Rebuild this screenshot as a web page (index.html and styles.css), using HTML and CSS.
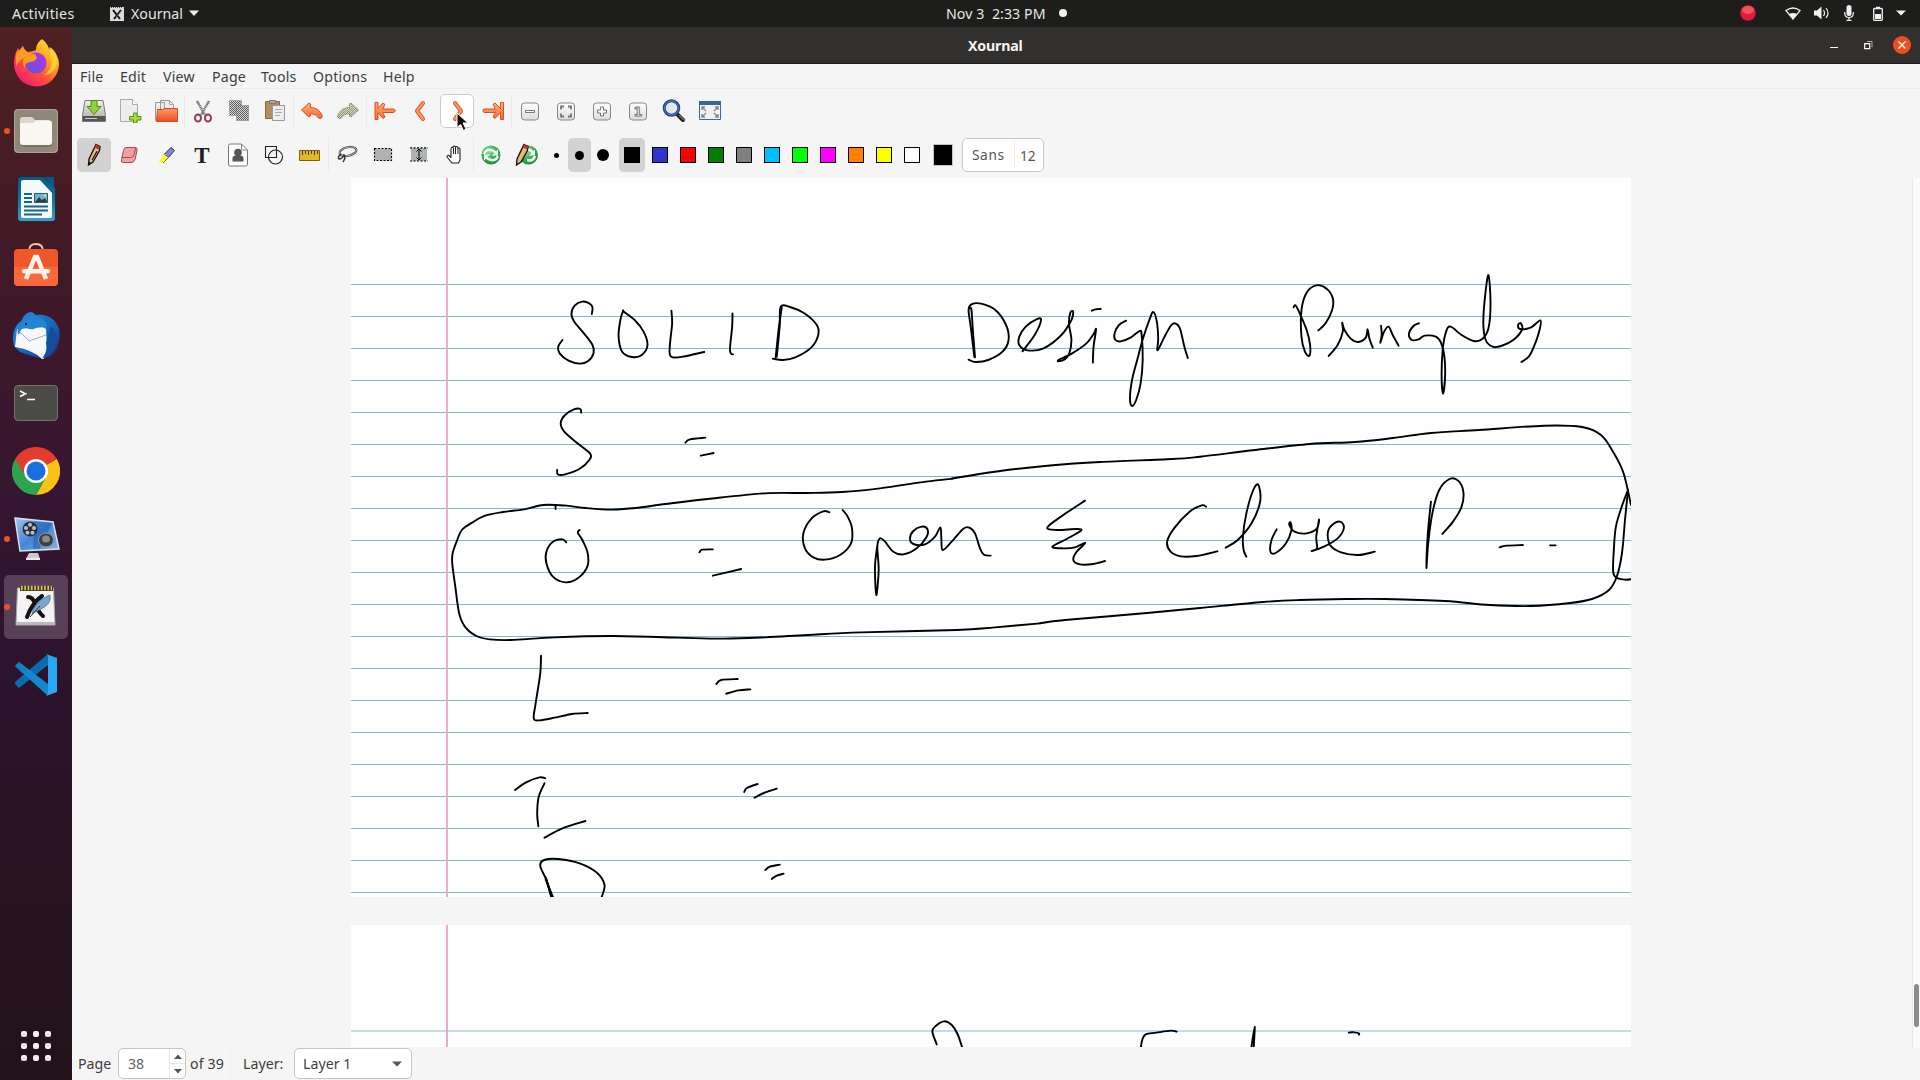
FILE: index.html
```html
<!DOCTYPE html>
<html lang="en">
<head>
<meta charset="utf-8">
<title>Xournal</title>
<link rel="stylesheet" href="styles.css">
</head>
<body>
<svg class="defs" width="0" height="0" aria-hidden="true">
  <defs>
    <linearGradient id="orange" x1="0" y1="0" x2="0" y2="1"><stop offset="0" stop-color="#ffae7c"/><stop offset="1" stop-color="#fb6a35"/></linearGradient>
    <linearGradient id="fold" x1="0" y1="0" x2="0" y2="1"><stop offset="0" stop-color="#ff9a68"/><stop offset="1" stop-color="#ee4a1d"/></linearGradient>
    <linearGradient id="key" x1="0" y1="0" x2="0" y2="1"><stop offset="0" stop-color="#fff"/><stop offset="1" stop-color="#dcdcdc"/></linearGradient>
    <linearGradient id="metal" x1="0" y1="0" x2="0" y2="1"><stop offset="0" stop-color="#f2f2f2"/><stop offset="1" stop-color="#a8a8a8"/></linearGradient>
    <linearGradient id="fox" x1="1" y1="0" x2="0.2" y2="1"><stop offset="0" stop-color="#fff44f"/><stop offset="0.35" stop-color="#ffb01e"/><stop offset="0.65" stop-color="#ff5238"/><stop offset="1" stop-color="#f0157c"/></linearGradient>
    <linearGradient id="globe" x1="1" y1="0" x2="0" y2="1"><stop offset="0" stop-color="#b833e1"/><stop offset="1" stop-color="#5b54e0"/></linearGradient>
    <linearGradient id="writer" x1="0" y1="0" x2="0" y2="1"><stop offset="0" stop-color="#045a83"/><stop offset="0.5" stop-color="#0c76a3"/><stop offset="1" stop-color="#36a0cd"/></linearGradient>
    <linearGradient id="bird" x1="0" y1="0" x2="1" y2="1"><stop offset="0" stop-color="#2492dd"/><stop offset="0.6" stop-color="#1763b4"/><stop offset="1" stop-color="#2c1c6d"/></linearGradient>
    <linearGradient id="screen" x1="0" y1="0" x2="1" y2="1"><stop offset="0" stop-color="#9cc6f2"/><stop offset="0.5" stop-color="#4486d6"/><stop offset="1" stop-color="#89b6e8"/></linearGradient>
    <radialGradient id="green" cx="0.4" cy="0.3" r="0.8"><stop offset="0" stop-color="#8fe39c"/><stop offset="0.6" stop-color="#29a94a"/><stop offset="1" stop-color="#178334"/></radialGradient>
    <pattern id="dither" width="2" height="2" patternUnits="userSpaceOnUse"><rect width="2" height="2" fill="#d8d8d6"/><rect width="1" height="1" fill="#5c5c5c"/><rect x="1" y="1" width="1" height="1" fill="#5c5c5c"/></pattern>
  </defs>
</svg>

<header class="topbar">
  <span class="activities">Activities</span>
  <span class="appmenu">
    <svg width="14" height="15" viewBox="0 0 14 15"><path fill="#ddd" d="M0 1h14v14H0z"/><path stroke="#555" stroke-dasharray="1 1" d="M1 1.5h12"/><path fill="none" stroke="#111" stroke-width="2" d="M3 4l7 9M11 4l-7 9"/><path stroke="#777" d="M12 4l-6 7"/></svg>
    <span class="appname">Xournal</span>
    <svg width="10" height="6" viewBox="0 0 10 6"><path fill="#f2f2f2" d="M0 .5h10L5 6z"/></svg>
  </span>
  <span class="clock">Nov 3&nbsp; 2:33 PM</span>
  <span class="notice"></span>
  <span class="tray">
    <svg class="rec" width="16" height="16" viewBox="0 0 16 16"><circle cx="8" cy="8" r="7.8" fill="#e01b3c"/><ellipse cx="8" cy="5" rx="6" ry="4" fill="#ff6a6a" opacity=".7"/></svg>
    <svg class="wifi" width="16" height="13" viewBox="0 0 16 13"><path fill="none" stroke="#f2f2f2" stroke-width="1.3" d="M1 3.6Q8-1.6 15 3.6L8 12z"/><path fill="#f2f2f2" d="M4 7q4-2 8 0l-4 5.4z"/></svg>
    <svg class="vol" width="16" height="14" viewBox="0 0 16 14"><path fill="#f2f2f2" d="M0 4.5h3L7.5.5v13L3 9.500H0z"/><path fill="none" stroke="#f2f2f2" stroke-width="1.2" d="M9.500 4q2 3 0 6M12 2q4 5 0 10"/></svg>
    <svg class="mic" width="10" height="16" viewBox="0 0 10 16"><rect x="2.500" width="5" height="11" rx="2.500" fill="#f2f2f2"/><path fill="none" stroke="#f2f2f2" stroke-width="1.2" d="M.7 7v1.500Q1 12.500 5 12.500t4.300-4V7M5 12.500v3M2.500 15.300h5"/></svg>
    <svg class="bat" width="10" height="15" viewBox="0 0 10 15"><path fill="none" stroke="#f2f2f2" stroke-width="1.300" d="M3 1.500h4M1.500 2.500h7q.8 0 .8 1v9.800q0 1-.8 1h-7q-.8 0-.8-1V3.500q0-1 .8-1z"/><path fill="#f2f2f2" d="M2 8h6v5H2z"/></svg>
    <svg class="caret" width="10" height="6" viewBox="0 0 10 6"><path fill="#f2f2f2" d="M0 .5h10L5 5.500z"/></svg>
  </span>
</header>

<div class="desktop">
<nav class="dock">
  <div class="app"><svg width="48" height="48" viewBox="0 0 48 48">
    <path fill="url(#fox)" d="M30 0q6 5 7 11l1-3q9 8 9 17A22.500 22.500 0 0 1 2 25Q2 16 6 9l2 4 3-6q1 4 5 6 6-1 8-2 0-7 6-11z"/>
    <circle cx="24" cy="24" r="10.500" fill="url(#globe)"/>
    <path fill="#ff9b25" d="M4 15l7-8q1 5 6 7l6 1 2 4q-2 4-8 4-5 2-4 6-4-5-1-10-5 2-8 8z"/>
    <path fill="#fed639" opacity=".8" d="M30 1q6 5 8 14 6 12-6 21 13-1 13-16 0-7-6-11l-1 3q-2-7-8-11z"/>
  </svg></div>
  <div class="app running"><svg width="48" height="48" viewBox="0 0 48 48"><rect x="2" y="2" width="44" height="44" rx="4" fill="#8f8778"/><rect x="2.500" y="2.500" width="43" height="43" rx="4" fill="none" stroke="#ada597"/><path fill="#7b7365" d="M9 17h31v20q0 3-3 3H12q-3 0-3-3z"/><path fill="#ddd6cc" d="M8 13q0-3 3-3h9l3 3h14l2 3H8z"/><path fill="#faf7f3" d="M8 16h13l3-2.500h13q3 0 3 3V35q0 3-3 3H11q-3 0-3-3z"/></svg></div>
  <div class="app"><svg width="48" height="48" viewBox="0 0 48 48"><path fill="url(#writer)" d="M9 2h23l11 11v30q0 3-3 3H9q-3 0-3-3V5q0-3 3-3z"/><path fill="#045b84" d="M33 2h9v11z"/><path fill="#f5fafc" d="M11 5h17l12 13v23q0 2-2 2H11q-2 0-2-2V7q0-2 2-2z"/><path stroke="#14658d" stroke-width="2" d="M12 19h8M12 23h8M12 27h8M12 31.500h24M12 35.500h24M12 39.500h18"/><path fill="#65b5dd" stroke="#245c79" d="M22.500 18.500h13v9h-13z"/><path fill="#333e2e" d="M23 27l4-5 3 3 3-2 2 4z"/><circle cx="33" cy="20.500" r="1.300" fill="#ffd54a"/></svg></div>
  <div class="app"><svg width="48" height="48" viewBox="0 0 48 48"><path fill="none" stroke="#f6c6a9" stroke-width="1.800" d="M17 8q0-7 7-7t7 7"/><rect x="2" y="6" width="44" height="37" rx="4" fill="#f0572b"/><path fill="#ff7247" opacity=".6" d="M2 24h44v15q0 4-4 4H6q-4 0-4-4z"/><path fill="none" stroke="#fff4ec" stroke-width="4.500" d="M14 36L23 14h2l9 22"/><rect x="10" y="26" width="28" height="4.500" rx="2.200" fill="#fff4ec"/></svg></div>
  <div class="app"><svg width="48" height="48" viewBox="0 0 48 48"><circle cx="24" cy="25" r="22" fill="#2a1a63"/><path fill="url(#bird)" d="M2 35Q-2 18 10 9L8 17Q10 1 20 1l4 3q17-2 23 14 3 15-7 26-5 4-13 3L8 41z"/><path fill="#f6f8fc" d="M5 18l29-2 1 25-4 8Q22 39 3 36z"/><path fill="none" stroke="#9eabc5" d="M6 19l11 11 17-6"/><path fill="#2185d1" d="M9 14q7-14 20-7 8 5 5 11-6-5-12 0-5 1-9-2-5 2-6 8-4-5 2-10z"/><path fill="#114f9c" d="M39 15q10 10 2 25-4 6-11 7 6-6 4-15z"/><circle cx="14" cy="13" r="1.200" fill="#092a55"/></svg></div>
  <div class="app"><svg width="48" height="48" viewBox="0 0 48 48"><rect x="2.500" y="6.500" width="43" height="35" rx="3.500" fill="#4b4b48" stroke="#73736f"/><path fill="none" stroke="#fff" stroke-width="1.600" d="M8 12l5.500 2.700L8 17.500M15 20.500h8"/></svg></div>
  <div class="app"><svg width="48" height="48" viewBox="0 0 48 48"><path fill="#e33b2e" d="M24 24L3.200 12A24 24 0 0 1 44.800 12z"/><path fill="#fbc116" d="M24 24L44.800 12A24 24 0 0 1 24 48L34 30z"/><path fill="#2da44e" d="M24 24l10 6L24 48A24 24 0 0 1 3.200 12z"/><path fill="#e33b2e" d="M3.200 12L14 30V12z"/><path fill="#e33b2e" d="M14 12h30.800L34 15z"/><circle cx="24" cy="24" r="12" fill="#fff"/><circle cx="24" cy="24" r="9.500" fill="#1a6fe0"/></svg></div>
  <div class="app running"><svg width="48" height="48" viewBox="0 0 48 48"><path fill="url(#screen)" stroke="#dce1e8" stroke-width="1.500" d="M3 3l38 4 6 27-39 2z"/><path fill="#1857b0" opacity=".5" d="M22 6l18 2-12 26h-7z"/><circle cx="18" cy="14" r="7.500" fill="#2b2e34"/><g fill="#b9c0c9"><circle cx="18" cy="9.700" r="2"/><circle cx="14" cy="13" r="2"/><circle cx="22" cy="13" r="2"/><circle cx="15.500" cy="17.700" r="2"/><circle cx="20.500" cy="17.700" r="2"/></g><ellipse cx="34" cy="25" rx="7.500" ry="7" fill="#3b4046" stroke="#999"/><ellipse cx="34" cy="24" rx="4" ry="3.500" fill="#878b90"/><path fill="#c9cbcd" d="M17 38h9l2 6H14z"/><path fill="#ededed" d="M14 43h14v2H14z"/></svg></div>
  <div class="app running active"><svg width="48" height="48" viewBox="0 0 48 48"><path fill="#f4f4f2" stroke="#aaa" d="M5.500 5h36l1.500 37H4z"/><path fill="#bbb" d="M4 39h39v3H4z"/><path fill="#333" d="M8 3h33v5H8z"/><path stroke="#e0c63c" stroke-width="4.500" stroke-dasharray="1.700 1.600" d="M9 5h31"/><path fill="none" stroke="#111" stroke-width="4" stroke-linecap="round" d="M16 14q5 0 7 7 4 9 8 12M30 13Q20 20 15 34"/><path fill="#7da6ce" stroke="#446a93" stroke-width=".7" d="M20 31q2-13 18-19 2 9-9 14z"/><path stroke="#333" d="M18 34l10-11"/></svg></div>
  <div class="app"><svg width="48" height="48" viewBox="0 0 48 48"><path fill="#0c6cae" d="M3 33l4 4L36 14V3L3 31z"/><path fill="#1488ce" d="M3 15l4-4 29 22v12z"/><path fill="#27a8f1" d="M34 3l11 4v34l-11 4q2-1 2-3V6q0-2-2-3z"/><path fill="#0f78bd" d="M3 15l4-4 9 7-5 5z" opacity=".5"/></svg></div>
  <div class="showapps"><i></i><i></i><i></i><i></i><i></i><i></i><i></i><i></i><i></i></div>
</nav>

<main class="window">
  <div class="titlebar"><h1 class="title">Xournal</h1>
    <div class="controls">
      <svg width="8" height="10" viewBox="0 0 8 10"><path stroke="#fff" d="M0 7.500h8"/></svg>
      <svg width="9" height="9" viewBox="0 0 9 9"><path fill="none" stroke="#fff" stroke-width="1.200" d="M.7 2.700h5v5h-5z"/><path fill="none" stroke="#aaa" d="M3 .5h5v6"/></svg>
      <span class="close"><svg width="8" height="8" viewBox="0 0 8 8"><path stroke="#fff" stroke-width="1.400" d="M.5.5l7 7M7.500.5l-7 7"/></svg></span>
    </div>
  </div>
  <nav class="menubar"><span class="m-file">File</span><span class="m-edit">Edit</span><span class="m-view">View</span><span class="m-page">Page</span><span class="m-tools">Tools</span><span class="m-options">Options</span><span class="m-help">Help</span></nav>

  <div class="toolbar main-tools">
    <span class="tool"><svg width="24" height="24" viewBox="0 0 24 24"><path fill="url(#metal)" stroke="#777" d="M3 1.500h18l2.500 15v6H.5v-6z"/><path fill="#555" d="M1 17h22v5H1z"/><path stroke="#ccc" d="M3 19.500h12"/><path fill="#8fd13a" stroke="#4e8c0c" d="M9 1.500h6v6h4l-7 8-7-8h4z"/></svg></span>
    <span class="tool"><svg width="24" height="24" viewBox="0 0 24 24"><path fill="#eeeeec" stroke="#aaa" d="M2.500.5h12l5 5v17h-17z"/><path fill="#fff" stroke="#aaa" d="M14.500.5v5h5"/><path fill="#a4dc3c" stroke="#5c9412" d="M15.500 14h3.500v3.500h4v3.500h-4v3h-3.500v-3h-4v-3.500h4z"/></svg></span>
    <span class="tool"><svg width="24" height="24" viewBox="0 0 24 24"><path fill="#eee" stroke="#999" d="M1.500 3.500h9v18h-9zM6.500 1.500h9l4 4v6h-13z"/><path fill="none" stroke="#aaa" d="M15.500 1.500v4h4"/><path fill="url(#fold)" stroke="#d9481e" d="M3.500 10.500h5l2-1h13v13h-21z"/></svg></span>
    <i class="sep"></i>
    <span class="tool"><svg width="24" height="24" viewBox="0 0 24 24"><path stroke="#6c6c6c" stroke-width="2.500" stroke-dasharray="1.200 .5" d="M6 2l8 14M18 2l-8 14"/><g fill="none" stroke="#91424f" stroke-width="2"><ellipse cx="7" cy="19" rx="3" ry="3.600"/><ellipse cx="17" cy="19" rx="3" ry="3.600"/></g></svg></span>
    <span class="tool"><svg width="24" height="24" viewBox="0 0 24 24"><path fill="url(#dither)" stroke="#888" stroke-dasharray="1 1" d="M2.500 1.500h12v15h-12z"/><path fill="url(#dither)" stroke="#777" stroke-dasharray="1 1" d="M9.500 6.500h12v15h-12z"/></svg></span>
    <span class="tool"><svg width="24" height="24" viewBox="0 0 24 24"><path fill="#b58d62" stroke="#8a6a48" d="M2.500 2.500h14v17h-14z"/><path fill="#aaa" stroke="#777" d="M6.500 1.500h6v3h-6z"/><path fill="#eeeeec" stroke="#999" d="M9.500 6.500h12v15h-12z"/><path stroke="#aaa" d="M12 10.500h7M12 13.500h7M12 16.500h5"/></svg></span>
    <i class="sep"></i>
    <span class="tool"><svg width="24" height="24" viewBox="0 0 24 24"><path fill="url(#orange)" stroke="#d9501e" stroke-linejoin="round" d="M1.500 11L9 4l1.500 1v3.500q9 0 12 9-1 3-4 1.500-2-4-8-4.500V17l-1.500 1z"/></svg></span>
    <span class="tool"><svg width="24" height="24" viewBox="0 0 24 24"><path fill="#c6d6a4" stroke="#6d7a55" stroke-dasharray="1.500 .6" d="M22.500 11L15 4l-1.500 1v3.500q-9 0-12 9 1 3 4 1.500 2-4 8-4.500V17l1.500 1z"/><path fill="url(#dither)" opacity=".5" d="M22.500 11L15 4v4.500q-10 0-13.500 9 1 3 4 1.500 2-4 8-4.500V18z"/></svg></span>
    <i class="sep"></i>
    <span class="tool"><svg width="24" height="24" viewBox="0 0 24 24"><path fill="url(#orange)" stroke="#d9501e" stroke-linejoin="round" d="M2 3.500h3v6L10 4l2 1.500L9.500 10H21q2.500 1.500 0 3.500H9.500L12 18l-2 1.500-5-6v7H2z"/></svg></span>
    <span class="tool"><svg width="24" height="24" viewBox="0 0 24 24"><path fill="none" stroke="#d9501e" stroke-width="4" stroke-linecap="round" stroke-linejoin="round" d="M14 4L8 12l6 8"/><path fill="none" stroke="#ff915c" stroke-width="2.300" stroke-linecap="round" stroke-linejoin="round" d="M14 4L8 12l6 8"/></svg></span>
    <span class="tool hover"><svg width="24" height="24" viewBox="0 0 24 24"><path fill="none" stroke="#d9501e" stroke-width="4" stroke-linecap="round" stroke-linejoin="round" d="M10 4l6 8-6 8"/><path fill="none" stroke="#ff915c" stroke-width="2.300" stroke-linecap="round" stroke-linejoin="round" d="M10 4l6 8-6 8"/></svg>
      <svg class="cursor" width="14" height="20" viewBox="0 0 14 20"><path fill="#111" stroke="#fff" stroke-width="1" d="M1 1l11 10H7l3 6-2.500 1.500-3-6L1 15.500z"/></svg></span>
    <span class="tool"><svg width="24" height="24" viewBox="0 0 24 24"><path fill="url(#orange)" stroke="#d9501e" stroke-linejoin="round" d="M22.500 3.500h-3v6L14 4l-2 1.500 2.500 4.500H3q-2.500 1.500 0 3.500h11.500L12 18l2 1.500 5.500-6v7h3z"/></svg></span>
    <i class="sep"></i>
    <span class="tool"><svg width="24" height="24" viewBox="0 0 24 24"><rect x="3.500" y="4" width="17" height="17" rx="3" fill="url(#key)" stroke="#888"/><path fill="#fff" stroke="#777" d="M7.500 11.500h9v2h-9z"/></svg></span>
    <span class="tool"><svg width="24" height="24" viewBox="0 0 24 24"><rect x="3.500" y="4" width="17" height="17" rx="3" fill="url(#key)" stroke="#888"/><path fill="none" stroke="#777" stroke-width="1.800" d="M7 10.500V7.500h3M14 7.500h3v3M17 14.500v3h-3M10 17.500H7v-3"/></svg></span>
    <span class="tool"><svg width="24" height="24" viewBox="0 0 24 24"><rect x="3.500" y="4" width="17" height="17" rx="3" fill="url(#key)" stroke="#888"/><path fill="#fff" stroke="#777" d="M10.500 8h3v3h3v3h-3v3h-3v-3h-3v-3h3z"/></svg></span>
    <span class="tool"><svg width="24" height="24" viewBox="0 0 24 24"><rect x="3.500" y="4" width="17" height="17" rx="3" fill="url(#key)" stroke="#888"/><text class="one" x="12" y="16.500">1</text></svg></span>
    <span class="tool"><svg width="24" height="24" viewBox="0 0 24 24"><path stroke="#222" stroke-width="4" stroke-linecap="round" d="M15 15l6 6"/><path stroke="#777" stroke-width="1.200" d="M17 16l5 5"/><circle cx="9.500" cy="9" r="7.300" fill="#dfe8f3" stroke="#2b4584" stroke-width="3"/><circle cx="9.500" cy="9" r="7" fill="none" stroke="#5a7ac0"/></svg></span>
    <span class="tool"><svg width="24" height="24" viewBox="0 0 24 24"><path fill="#f1f1ef" stroke="#3768aa" d="M1.500 2.500h21v18h-21z"/><path fill="#3465a4" d="M1 2h22v4H1z"/><path fill="none" stroke="#888" stroke-width="1.400" d="M4 11V8h3M4 8l4 4M20 11V8h-3M20 8l-4 4M4 15v3h3M4 18l4-4M20 15v3h-3M20 18l-4-4"/></svg></span>
  </div>

  <div class="toolbar pen-tools">
    <span class="tool selected"><svg width="24" height="24" viewBox="0 0 24 24"><path fill="#e9b776" stroke="#111" stroke-width="1.300" d="M14 1.500l4 2-.5 4L11 19l-4.500 3 .5-6z"/><path fill="#ce2d32" d="M14 1.500l4 2-1.500 3-4-2z"/><path fill="#111" d="M6.500 22l.3-3.500L9.500 20zM14.500 8l1 .5-5 9-1-.5z"/></svg></span>
    <span class="tool"><svg width="24" height="24" viewBox="0 0 24 24"><path fill="#f2a0a6" stroke="#a1474d" d="M8 4.500h9.500q2 0 1.500 3l-2 9q-1 3-4 3H5q-2.500 0-1.500-3l2-9q.7-3 2.500-3z"/><path fill="none" stroke="#a1474d" d="M4 14.500h8.500q3 0 3.500-3l1.700-6.500"/></svg></span>
    <span class="tool"><svg width="24" height="24" viewBox="0 0 24 24"><path fill="#8080ee" stroke="#333" d="M17 4.500l3.500 3-6 7-4.500-3z"/><path fill="#ffff20" d="M10 11l4.500 4-6 4.500H4.500z"/><path fill="none" stroke="#444" stroke-width=".8" d="M14.500 14.500L9 20"/></svg></span>
    <span class="tool"><svg width="24" height="24" viewBox="0 0 24 24"><text class="glyph-t" x="12" y="19.500">T</text></svg></span>
    <span class="tool"><svg width="24" height="24" viewBox="0 0 24 24"><path fill="#fff" stroke="#777" d="M4 1h11.500l6 6v14q0 2-2 2H4q-1.500 0-1.500-2V2.500Q2.500 1 4 1z"/><path fill="none" stroke="#888" d="M15.500 1v6h6"/><circle cx="12" cy="9.500" r="3.800" fill="#555"/><path fill="#555" d="M6.500 18.500v-3q0-3 3.500-3h4q3.500 0 3.500 3v3z"/></svg></span>
    <span class="tool"><svg width="24" height="24" viewBox="0 0 24 24"><path fill="none" stroke="#222" stroke-width="1.100" d="M3.500 3.500h11v11h-11z"/><circle cx="13.500" cy="14" r="7" fill="none" stroke="#222" stroke-width="1.100"/></svg></span>
    <span class="tool"><svg width="24" height="24" viewBox="0 0 24 24"><path fill="#e3b72c" stroke="#7d5f0c" d="M1.500 7.500h20v10h-20z"/><path stroke="#4d3b09" d="M4.500 8v4M7.500 8v3M10.500 8v4M13.500 8v3M16.500 8v4M19.500 8v3"/></svg></span>
    <i class="sep"></i>
    <span class="tool"><svg width="24" height="24" viewBox="0 0 24 24"><ellipse cx="13" cy="8.500" rx="8.500" ry="4.300" fill="none" stroke="#444" stroke-width="2.200" transform="rotate(-12 13 8.500)"/><ellipse cx="13" cy="8.500" rx="8.500" ry="4.300" fill="none" stroke="#ddd" stroke-width=".7" transform="rotate(-12 13 8.500)"/><path fill="none" stroke="#333" stroke-width="1.500" d="M6 11q-4 3-2 5 3 0 5-4 2 3-1 7"/></svg></span>
    <span class="tool"><svg width="24" height="24" viewBox="0 0 24 24"><path fill="#aeb2b0" stroke="#000" stroke-width="1.200" stroke-dasharray="2 1.500" d="M3.500 5.500h17v12h-17z"/></svg></span>
    <span class="tool"><svg width="24" height="24" viewBox="0 0 24 24"><path fill="#aeb2b0" d="M4 5h16v13H4z"/><path fill="none" stroke="#000" stroke-width="1.200" stroke-dasharray="2 1.500" d="M3 4.800h18M3 18h18"/><path fill="none" stroke="#000" d="M12 6v11M9.500 8.500L12 6l2.500 2.500M9.500 14.500L12 17l2.500-2.500"/></svg></span>
    <span class="tool"><svg width="24" height="24" viewBox="0 0 24 24"><path fill="#fff" stroke="#222" stroke-width="1.100" stroke-linejoin="round" d="M8 13V6q0-2 2-1.500V4q1-2 2.500 0 2-1.500 2.500 1 2-.5 2 1.500V17l-1.500 3H9L4 14q0-2 2-1.500l2 2z"/><path fill="none" stroke="#222" d="M10.500 5v6M12.500 4v7M15 5v6"/></svg></span>
    <i class="sep"></i>
    <span class="tool redraw"><svg width="24" height="24" viewBox="0 0 24 24"><circle cx="12" cy="12" r="9.500" fill="url(#green)"/><path fill="none" stroke="#fff" stroke-width="2.400" d="M5 11q2-5 7-4 3 .5 5 3M19 13q-2 5-7 4-3-.5-5-3"/><path fill="#fff" d="M19 6.500v6h-6zM5 17.500v-6h6z"/></svg></span>
    <span class="tool"><svg width="24" height="24" viewBox="0 0 24 24"><circle cx="13.500" cy="12" r="9.500" fill="url(#green)"/><path fill="none" stroke="#fff" stroke-width="2.400" d="M20 13q-2 6-8 4M12 7q4-1 6 3"/><path fill="#fff" d="M20 6.500v6h-6z"/><path fill="#e9b776" stroke="#111" stroke-width="1.300" d="M9 1.500l4 2-.5 4L6 19l-4.500 3 .5-6z"/><path fill="#ce2d32" d="M9 1.500l4 2-1 3-4-2z"/></svg></span>
    <span class="width"><i class="dot fine"></i></span><span class="width on"><i class="dot medium"></i></span><span class="width"><i class="dot thick"></i></span>
    <span class="palette">
      <span class="swatch on"><i class="c-black"></i></span><span class="swatch"><i class="c-blue"></i></span><span class="swatch"><i class="c-red"></i></span><span class="swatch"><i class="c-green"></i></span><span class="swatch"><i class="c-gray"></i></span><span class="swatch"><i class="c-sky"></i></span><span class="swatch"><i class="c-lime"></i></span><span class="swatch"><i class="c-magenta"></i></span><span class="swatch"><i class="c-orange"></i></span><span class="swatch"><i class="c-yellow"></i></span><span class="swatch"><i class="c-white"></i></span>
    </span>
    <i class="current"></i>
    <span class="font"><span class="family">Sans</span><span class="size">12</span></span>
  </div>

  <section class="canvas">
    <div class="pages">
      <article class="sheet first"><svg class="ink" width="1280" height="719" viewBox="351 178 1280 719" id="ink-a"></svg></article>
      <article class="sheet second"><svg class="ink" width="1280" height="122" viewBox="351 925 1280 122" id="ink-b"></svg></article>
    </div>
    <div class="scroll"><i class="thumb"></i></div>
  </section>

  <footer class="status">
    <span class="label">Page</span>
    <span class="spin"><span class="value">38</span><span class="steps"><span><svg width="8" height="5" viewBox="0 0 8 5"><path fill="#555" d="M0 5h8L4 .5z"/></svg></span><span><svg width="8" height="5" viewBox="0 0 8 5"><path fill="#555" d="M0 0h8L4 4.500z"/></svg></span></span></span>
    <span class="total">of 39</span>
    <i class="sep"></i>
    <span class="layer">Layer:</span>
    <span class="combo"><span>Layer 1</span><svg width="10" height="6" viewBox="0 0 10 6"><path fill="#555" d="M0 .5h10L5 5.500z"/></svg></span>
  </footer>
</main>
</div>
<script src="ink.js"></script>
</body>
</html>
```
FILE: ink.js
```js
// Pen strokes, grouped by block. Each block has an origin and a point scale;
// each stroke is a list of x,y points joined by a smooth curve.
const blocks = [
  { layer: 'ink-a', at: [540, 260], scale: [560 / 1568, 1 / 3], strokes: [
    '145,162 147,142 138,130 118,125 97,137 88,162 96,185 123,220 147,255 150,280 135,303 112,311 80,302 55,280 51,260 63,240',
    '233,151 225,180 220,230 230,275 258,291 285,285 301,255 290,215 265,180 232,153',
    '368,152 370,190 365,240 363,280 372,292 400,290 460,276',
    '539,160 538,200 532,265 535,281 541,283',
    '660,292 668,210 677,142',
    '663,290 671,200 674,140 700,141 740,160 775,195 779,225 760,262 715,292 680,300 652,296',
    '1218,292 1212,210 1208,150 1203,144',
    '1216,290 1206,200 1200,150 1208,133 1235,131 1275,150 1305,195 1312,240 1295,275 1255,300 1220,306 1200,299',
    '1351,274 1385,225 1403,180 1390,178 1360,200 1342,230 1342,255 1365,271 1410,265 1460,225 1488,180 1493,155 1485,158 1481,190 1488,240 1482,280 1470,298 1452,304 1454,299 1490,280 1530,250 1550,222 1557,208 1550,260 1548,308',
    '1545,152 1555,148 1570,147',
    '115,458 113,447 95,448 70,465 58,490 68,515 105,550 140,580 138,600 110,627 70,643 50,643 48,630',
    '407,548 420,538 463,533', '450,587 486,579'
  ] },
  { layer: 'ink-a', at: [1100, 260], scale: [540 / 1568, 1 / 3], strokes: [
    '76,182 55,195 42,222 45,240 60,244 90,232 115,213 121,225 124,300 118,370 105,420 93,438 87,415 93,360 108,300 125,235 145,175 155,156 165,185 169,235 167,271 185,235 205,198 218,190 232,205 245,260 255,294',
    '562,142 568,136 580,160 600,210 610,255 608,287 595,275 585,230 585,150 600,98 628,76 658,86 676,115 674,150 655,190 634,211',
    '664,288 690,255 705,215 703,188 710,210 730,238 750,246 772,232 777,208 782,235 792,263',
    '816,197 818,225 814,248 825,215 838,200 850,225 867,257',
    '926,190 910,198 897,222 905,240 925,238 943,227 975,230 990,248 1000,290 1002,350 996,401 992,350 995,270 1005,215 1018,200 1050,225 1085,243 1110,237 1128,205 1134,130 1128,45 1118,110 1113,190 1120,240 1140,260 1165,258 1200,240 1225,210 1222,190 1214,195 1220,207 1250,203 1279,181 1275,215 1260,260 1245,290 1224,306',
    '308,740 295,736 260,755 215,805 195,845 205,875 235,889 280,888 341,874',
    '365,863 400,840 440,790 465,725 460,675 445,690 425,760 415,830 417,870 425,890',
    '513,808 498,840 495,875 510,879 540,850 556,810 553,787 550,795 565,815 600,820 630,805 636,779 628,830 630,865 615,873 650,860 690,835 708,805 700,786 680,790 662,815 668,855 700,877 750,885 798,875',
    '961,725 952,820 948,924 953,850 965,760 985,690 1015,657 1040,662 1055,695 1050,740 1025,785 994,822',
    '1160,862 1180,857 1228,855', '1307,856 1323,856',
    '1533,690 1515,740 1498,800 1492,870 1490,935 1500,953 1525,959 1545,957'
  ] },
  { layer: 'ink-a', at: [440, 480], scale: [600 / 1568, 1 / 3], strokes: [
    '302,87 302,76',
    '330,187 320,178 295,185 278,215 278,250 295,290 328,307 360,295 385,260 386,220 372,180 360,158 365,150',
    '678,217 685,209 713,208', '713,287 787,267',
    '264,527 262,580 250,670 245,715 260,721 300,713 345,702 386,699',
    '722,612 735,600 778,597', '748,641 780,631 811,628',
    '196,930 225,907 260,892 275,895', '273,910 258,950 254,1000 257,1039', '273,1073 320,1045 380,1023',
    '795,936 802,924 830,912', '822,953 850,937 880,926',
    '292,1252 278,1200 262,1158 272,1140 310,1137 365,1150 410,1178 430,1215 421,1256',
    '277,1195 292,1256', '276,1198 297,1256', '277,1196 294,1256',
    '850,1170 862,1160 888,1154', '867,1197 880,1187 898,1181'
  ] },
  { layer: 'ink-a', at: [440, 480], scale: [600 / 1568, 1 / 3], strokes: [
    '1340,-4 1270,5 1150,25 1050,36 960,39 850,40 700,57 590,72 510,84 450,89 380,84 330,77 270,75 220,88 165,96 118,107 85,127 57,150 45,180 33,220 32,250 40,320 50,400 65,440 95,468 130,478 185,480 300,472 450,468 620,473 740,476 850,472 960,465 1100,457 1350,450 1450,442 1568,430'
  ] },
  { layer: 'ink-a', at: [780, 460], scale: [1 / 3, 1 / 3], strokes: [
    '148,157 130,154 95,175 70,220 75,265 100,292 135,299 180,285 213,250 216,205 203,170 188,150',
    '293,250 285,320 289,405 296,330 292,260 300,235 315,245 340,275 370,283 410,265 440,230 442,207 425,200 400,213 390,235 400,252 435,253 465,230 481,202 484,235 488,270 515,245 550,206 568,203 585,220 600,265 612,284 632,287',
    '915,122 850,165 802,202 830,210 890,207 903,212 860,237 817,260 850,265 885,262 916,249 890,275 880,300 900,313 940,312 975,303'
  ] },
  { layer: 'ink-a', at: [0, 0], scale: [1, 1], strokes: [
    '952,478.500 1000,471 1050,465.500 1100,462 1172,459 1200,456.700 1255,450 1310,444 1355,442 1393,438 1431,433 1479,430 1544,425.700 1582,427 1601,435 1613,451.700 1623.500,473 1631,505',
    '1040,623.300 1065,620 1147,613 1200,608 1263,602 1300,600 1347,599 1385,599 1445,601 1490,605 1531,606 1570,603 1592,599 1609,590 1617,576 1622,553 1625,520 1628,490'
  ] },
  { layer: 'ink-b', at: [880, 980], scale: [760 / 1568, 1 / 3], strokes: [
    '117,193 108,155 115,138 132,124 148,135 160,162 170,204', '538,204 541,180 548,163 570,158 600,152 612,155',
    '766,204 773,140 771,204', '967,158 978,157 988,160 988,164'
  ] }
];

function smooth(p) {
  let d = `M${p[0]}`;
  for (let i = 0; i < p.length - 1; i++) {
    const a = p[i - 1] || p[i], b = p[i], c = p[i + 1], e = p[i + 2] || c;
    const c1 = [b[0] + (c[0] - a[0]) / 6, b[1] + (c[1] - a[1]) / 6];
    const c2 = [c[0] - (e[0] - b[0]) / 6, c[1] - (e[1] - b[1]) / 6];
    d += `C${c1} ${c2} ${c}`;
  }
  return d;
}

for (const { layer, at, scale, strokes } of blocks) {
  for (const s of strokes) {
    const pts = s.split(' ').map(q => q.split(',').map((v, k) => at[k] + v * scale[k]));
    const path = document.createElementNS('http://www.w3.org/2000/svg', 'path');
    path.setAttribute('d', smooth(pts));
    document.getElementById(layer).append(path);
  }
}
```
FILE: styles.css
```css
* { box-sizing: border-box; }
body { margin: 0; width: 1920px; height: 1080px; overflow: hidden; display: flex; flex-direction: column; font: 14.200px "Noto Sans", sans-serif; color: #3d3d3d; background: #f4f5f4; }
svg { display: block; flex: none; }
.defs { position: absolute; }

.topbar { height: 27px; flex: none; padding-bottom: 1px; background: #1d1d1b; color: #e6e6e4; display: flex; align-items: center; white-space: nowrap; }
.activities { width: 110px; padding-left: 12px; letter-spacing: .35px; }
.appmenu { display: flex; align-items: center; width: 836px; }
.appname { width: 51px; padding-left: 7px; box-sizing: content-box; }
.appmenu svg:last-child { margin-left: 7px; }
.clock { width: 111px; letter-spacing: .06px; }
.notice { width: 8px; height: 8px; margin-left: 2px; border-radius: 50%; background: #f0f0ee; }
.tray { display: flex; align-items: center; margin-left: 673px; }
.wifi { margin-left: 29px; }
.vol { margin-left: 13px; }
.mic { margin-left: 14px; }
.bat { margin-left: 19px; }
.caret { margin-left: 13px; }

.desktop { flex: 1; display: flex; min-height: 0; }
.dock { width: 72px; flex: none; padding: 4px; display: flex; flex-direction: column; gap: 4px; background: linear-gradient(#4f2022 0, #431a25 18%, #371630 42%, #2c132c 63%, #261320 85%, #22131a); }
.app { height: 64px; position: relative; display: flex; align-items: center; justify-content: center; border-radius: 5px; }
.app.active { background: #594059; }
.app.running::before { content: ""; position: absolute; left: 0; top: 29px; width: 6px; height: 6px; border-radius: 50%; background: #e95420; }
.showapps { margin: auto auto 15px; display: grid; grid-template-columns: repeat(3, 6px); gap: 6px; }
.showapps i { height: 6px; border-radius: 2px; background: #f4eef0; }

.window { flex: 1; min-width: 0; display: flex; flex-direction: column; background: #f4f5f4; }
.titlebar { height: 37px; flex: none; background: #32302f; border-bottom: 1px solid #1b1a19; display: flex; align-items: center; }
.title { margin: 0 0 0 896px; width: 100px; font-size: 14.200px; font-weight: 700; color: #f5f4f2; letter-spacing: -.2px; }
.controls { margin-left: auto; display: flex; align-items: center; padding-right: 9px; }
.controls svg:nth-child(2) { margin-left: 26px; }
.close { width: 18px; height: 18px; margin-left: 20px; border-radius: 50%; background: #f04e20; display: flex; align-items: center; justify-content: center; }

.menubar { height: 25px; flex: none; display: flex; align-items: center; padding: 1px 0 0 8px; border-bottom: 1px solid #ebecea; line-height: 23px; letter-spacing: .2px; }
.m-file { width: 40px; } .m-edit { width: 43px; } .m-view { width: 49px; } .m-page { width: 49px; } .m-tools { width: 52px; } .m-options { width: 70px; }

.toolbar { height: 44px; flex: none; display: flex; align-items: center; padding-left: 4px; }
.toolbar.pen-tools { height: 45px; padding-bottom: 1px; }
.tool { width: 36px; height: 34px; display: flex; align-items: center; justify-content: center; border: solid transparent; border-width: 0 1px; border-radius: 5px; }
.tool.selected, .width.on, .swatch.on { background: #d2d2d1; background-clip: padding-box; border-radius: 5px; }
.tool.hover { position: relative; width: 34px; margin: 0 1px; border: 1px solid #ccc; background: #fff; }
.cursor { position: absolute; left: 15px; top: 17px; }
.toolbar .sep { width: 1px; height: 34px; background: #ebecea; }
.tool.redraw { margin-left: -1px; }
.width { width: 23px; height: 34px; display: flex; align-items: center; justify-content: center; }
.dot { border-radius: 50%; background: #000; }
.fine { width: 5px; height: 5px; } .medium { width: 9px; height: 9px; } .thick { width: 12px; height: 12px; }
.palette { display: flex; margin-left: 4px; }
.swatch { width: 28px; height: 34px; border: solid transparent; border-width: 0 1px; display: flex; align-items: center; justify-content: center; }
.swatch i { width: 16px; height: 16px; border: 1px solid #000; }
.c-black { background: #000; } .c-blue { background: #3333cc; } .c-red { background: #f00; } .c-green { background: #008000; } .c-gray { background: #808080; } .c-sky { background: #00c0ff; } .c-lime { background: #0f0; } .c-magenta { background: #f0f; } .c-orange { background: #ff8000; } .c-yellow { background: #ff0; } .c-white { background: #fff; }
.current { width: 20px; height: 22px; margin-left: 7px; background: #000; border: 1px solid #c4c4c4; }
.font { width: 82px; height: 34px; margin-left: 9px; display: flex; align-items: center; border: 1px solid #c9c9c7; border-radius: 5px; background: #fff; font-size: 13.700px; color: #555; }
.family { width: 52px; padding-left: 9px; line-height: 28px; border-right: 1px solid #eee; letter-spacing: .6px; }
.size { padding-left: 5px; }
.one { font: 700 12px "DejaVu Sans", sans-serif; text-anchor: middle; fill: #fff; stroke: #777; stroke-width: 1; }
.glyph-t { font: 700 23px "Liberation Serif", serif; text-anchor: middle; fill: #1c1c1c; }

.canvas { height: 869px; flex: none; display: flex; overflow: hidden; }
.pages { width: 1840px; padding-left: 279px; }
.sheet { width: 1280px; overflow: hidden; background-color: #fefefe; background-repeat: no-repeat; }
.first { height: 719px; background-image: linear-gradient(#f3a9d0, #f3a9d0), repeating-linear-gradient(#80b3e6 0 1px, transparent 1px 32px); background-size: 2px 100%, 100% 613px; background-position: 95px 0, 0 106px; }
.second { height: 122px; margin-top: 28px; background-image: linear-gradient(#eda9cb, #eda9cb), linear-gradient(#bfdbfc, #bfdbfc); background-size: 2px 100%, 100% 2px; background-position: 95px 0, 0 105px; }
.ink path { fill: none; stroke: #000; stroke-width: 1.900; stroke-linecap: round; stroke-linejoin: round; }
.scroll { width: 8px; background: #fbfbfb; border-left: 1px solid #e6e7e6; display: flex; justify-content: center; padding-top: 806px; }
.thumb { width: 5px; height: 43px; border-radius: 3px; background: #8b8c8c; }

.status { height: 33px; flex: none; display: flex; align-items: center; padding: 0 0 0 6px; white-space: nowrap; }
.label { width: 40px; }
.spin { width: 68px; height: 31px; display: flex; border: 1px solid #c6c6c4; border-radius: 5px; background: #fff; color: #666; }
.value { width: 51px; padding-left: 9px; line-height: 29px; border-right: 1px solid #e6e6e6; }
.steps { flex: 1; display: flex; flex-direction: column; }
.steps span { flex: 1; display: flex; align-items: center; justify-content: center; }
.steps span + span { border-top: 1px solid #e6e6e6; }
.total { width: 44px; padding-left: 4px; letter-spacing: .1px; }
.status .sep { width: 1px; height: 31px; background: #eeefee; }
.layer { width: 63px; padding-left: 12px; }
.combo { width: 118px; height: 31px; padding: 0 9px 0 8px; display: flex; align-items: center; justify-content: space-between; border: 1px solid #c6c6c4; border-radius: 5px; background: #fff; }
```
